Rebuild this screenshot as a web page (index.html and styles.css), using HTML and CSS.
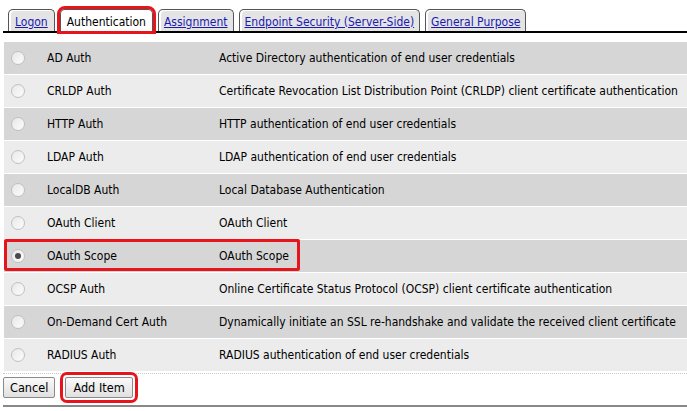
FILE: index.html
```html
<!DOCTYPE html>
<html>
<head>
<meta charset="utf-8">
<link rel="stylesheet" href="styles.css">
</head>
<body>
<div class="tabs">
  <div class="tab"><a href="#">Logon</a></div>
  <div class="tab active"><span>Authentication</span></div>
  <div class="tab"><a href="#">Assignment</a></div>
  <div class="tab"><a href="#">Endpoint Security (Server-Side)</a></div>
  <div class="tab"><a href="#">General Purpose</a></div>
</div>
<div class="list">
  <div class="row dark"><span class="radio"></span><span class="name">AD Auth</span><span class="desc">Active Directory authentication of end user credentials</span></div>
  <div class="row light"><span class="radio"></span><span class="name">CRLDP Auth</span><span class="desc">Certificate Revocation List Distribution Point (CRLDP) client certificate authentication</span></div>
  <div class="row dark"><span class="radio"></span><span class="name">HTTP Auth</span><span class="desc">HTTP authentication of end user credentials</span></div>
  <div class="row light"><span class="radio"></span><span class="name">LDAP Auth</span><span class="desc">LDAP authentication of end user credentials</span></div>
  <div class="row dark"><span class="radio"></span><span class="name">LocalDB Auth</span><span class="desc">Local Database Authentication</span></div>
  <div class="row light"><span class="radio"></span><span class="name">OAuth Client</span><span class="desc">OAuth Client</span></div>
  <div class="row dark marked"><span class="radio checked"></span><span class="name">OAuth Scope</span><span class="desc">OAuth Scope</span><span class="highlight"></span></div>
  <div class="row light"><span class="radio"></span><span class="name">OCSP Auth</span><span class="desc">Online Certificate Status Protocol (OCSP) client certificate authentication</span></div>
  <div class="row dark"><span class="radio"></span><span class="name">On-Demand Cert Auth</span><span class="desc">Dynamically initiate an SSL re-handshake and validate the received client certificate</span></div>
  <div class="row light"><span class="radio"></span><span class="name">RADIUS Auth</span><span class="desc">RADIUS authentication of end user credentials</span></div>
</div>
<div class="actions">
  <button class="btn">Cancel</button>
  <button class="btn primary">Add Item</button>
</div>
</body>
</html>
```
FILE: styles.css
```css
html, body {
  margin: 0;
  padding: 0;
  background: #fff;
}
body {
  font-family: "DejaVu Sans Condensed", "DejaVu Sans", sans-serif;
  font-size: 12px;
  color: #000;
  width: 687px;
  overflow: hidden;
}
.tabs {
  display: flex;
  align-items: flex-end;
  gap: 5px;
  margin: 9px 0 0 3px;
  padding-left: 5px;
  height: 22px;
  border-bottom: 2px solid #000;
  font-size: 12px;
}
.tab {
  height: 21px;
  line-height: 24px;
  padding: 0 5px;
  border: 1px solid #555;
  border-bottom: none;
  border-radius: 5px 5px 0 0;
  background: #e4e4e4;
  box-shadow: inset 2px 1px 0 #fff;
}
.tab:first-child {
  padding: 0 6px;
}
.tab a {
  color: #1a1ab0;
  text-decoration: underline;
}
.tab.active {
  background: #fff;
  box-shadow: none;
  outline: 3px solid #e8141b;
  outline-offset: 0px;
  padding: 0 6px;
}
.list {
  margin: 9px 0 0 4px;
  display: flex;
  flex-direction: column;
  gap: 1px;
}
.row {
  position: relative;
  display: flex;
  align-items: center;
  height: 32px;
}
.row.dark { background: #d6d6d6; }
.row.light { background: #ececec; }
.radio {
  width: 12px;
  height: 12px;
  border-radius: 50%;
  border: 1px solid #c0c0c0;
  background: linear-gradient(135deg, #e8e8e8, #fcfcfc);
  margin-left: 7px;
  margin-right: 22px;
  flex: none;
  position: relative;
}
.radio.checked::after {
  content: "";
  position: absolute;
  left: 3px;
  top: 3px;
  width: 6px;
  height: 6px;
  border-radius: 50%;
  background: #4a4a4a;
}
.name {
  width: 172px;
  flex: none;
  white-space: nowrap;
}
.desc {
  white-space: nowrap;
}
.highlight {
  position: absolute;
  left: 0;
  top: -1px;
  width: 296px;
  height: 32px;
  box-sizing: border-box;
  border: 3px solid #e8141b;
  border-radius: 2px;
}
.actions {
  margin: 2px 0 0 3px;
  padding: 3px 0 7px;
  border-top: 1px dotted #c8c8c8;
  border-bottom: 2px solid #888;
  display: flex;
  gap: 10px;
}
.btn {
  font: inherit;
  font-size: 12.6px;
  height: 21px;
  padding: 0 6px;
  background: linear-gradient(#fafafa, #e0e0e0);
  border: 1px solid #8a8a8a;
  border-radius: 2px;
  color: #000;
}
.btn.primary {
  outline: 3px solid #e8141b;
  outline-offset: 2px;
  padding: 0 7px;
}
```
